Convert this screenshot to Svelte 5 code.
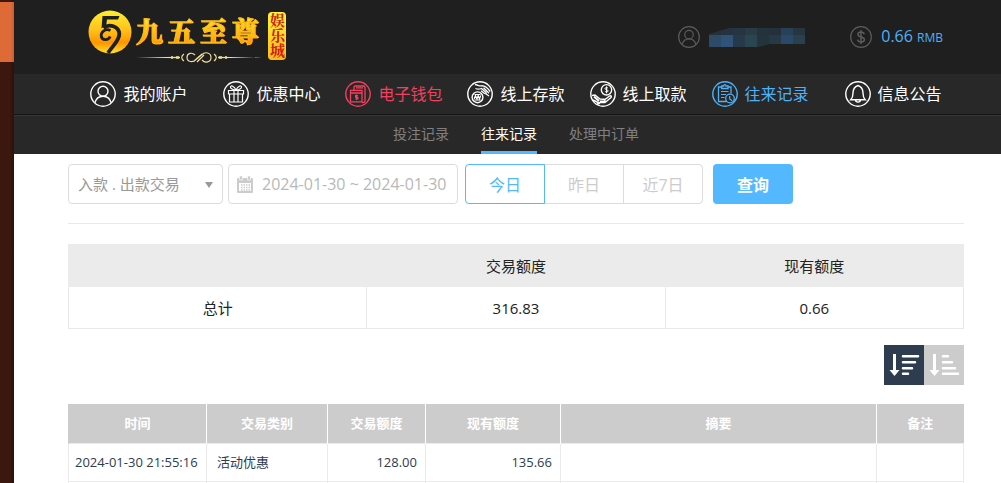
<script>
    const navItems = [
        { icon: 'user', label: '我的账户' },
        { icon: 'gift', label: '优惠中心' },
        { icon: 'wallet', label: '电子钱包', tone: 'hot' },
        { icon: 'deposit', label: '线上存款' },
        { icon: 'withdraw', label: '线上取款' },
        { icon: 'record', label: '往来记录', tone: 'current' },
        { icon: 'bell', label: '信息公告' }
    ];

    const tabs = ['投注记录', '往来记录', '处理中订单'];
    let activeTab = $state('往来记录');

    const ranges = ['今日', '昨日', '近7日'];
    let activeRange = $state('今日');

    let type = $state('入款 . 出款交易');
    let dates = $state('2024-01-30 ~ 2024-01-30');
    let sortDesc = $state(true);

    const columns = ['时间', '交易类别', '交易额度', '现有额度', '摘要', '备注'];
    const rows = [
        { time: '2024-01-30 21:55:16', kind: '活动优惠', amount: '128.00', balance: '135.66' },
        { time: '', kind: '', amount: '', balance: '' }
    ];

    // pixelated account name: top row and bottom row colours
    const maskTop = ['#24313b', '#24333f', '#253642', '#273c45', '#23323c', '#24313a', '#28415a', '#26363f'];
    const maskBottom = ['#2d4b68', '#305276', '#26394a', '#294650', '#24343d', '#263945', '#2b486b', '#29404e'];
</script>

{#snippet icon(name)}
    <svg class="icon" viewBox="0 0 26 26" fill="none" stroke="currentColor" stroke-width="1.4" aria-hidden="true">
        <circle cx="13" cy="13" r="12.2" />
        {#if name === 'user'}
            <circle cx="13" cy="10.2" r="5" />
            <path d="M4.8 21.8c1.2-4.200 4.300-6.600 8.200-6.600s7 2.400 8.200 6.600" />
        {:else if name === 'coin'}
            <path d="M16.800 9.700c-.4-1.700-1.800-2.500-3.700-2.500-2.200 0-3.700 1-3.700 2.800 0 4.300 7.600 1.700 7.600 6 0 1.900-1.600 2.900-3.900 2.900-2.200 0-3.800-1-4.100-2.900M13 4.800v16.500" stroke-width="1.700" />
        {:else if name === 'gift'}
            <path d="M5.500 9.500h15v3.500h-15zM6.500 13v8h13v-8M11 9.500V21M15 9.500V21M13 9c-2-4-5-5-5.500-3.200-.4 1.600 2.500 3 5.500 3.200 3-.2 5.900-1.600 5.500-3.200C18 4 15 5 13 9z" stroke-width="1.200" />
        {:else if name === 'wallet'}
            <path d="M9 9V6.500c0-1 .5-1.500 1.500-1.500h8c1 0 1.500.5 1.500 1.500V20c0 1-.5 1.500-1.500 1.500H17M11 6.800h7" stroke-width="1.300" />
            <path d="M5.500 9.300h11.500v11.500H5.500zM5.500 12H17" stroke-width="1.300" />
            <path d="M12.900 14.600h-2.300v1.700h2.200V18h-2.400M11.600 13.600v5.300" stroke-width="1.200" />
        {:else if name === 'deposit'}
            <circle cx="10.500" cy="16.300" r="5.400" />
            <path d="M7.500 13.500h6M7.500 19h6" stroke-width="1" />
            <path d="M7.200 18l1.300-3.500L10 18l1.200-3.500L12.500 18l1.200-3.500" stroke-width="1.200" />
            <path d="M8 3.500c3 .5 4 1.500 6.200 1.300 3-.3 5.500.8 9 5.700M8.500 7.500c2 .8 4 .8 6 0l4 3.500c1.500 1.300.7 2.400-1 1.500L14 9.700M18.500 12.500l3.500 2.500M16.500 6.800l5.500 5.500" stroke-width="1.300" />
        {:else if name === 'withdraw'}
            <circle cx="16.500" cy="8.800" r="5.200" />
            <path d="M18 7.200c-.4-.8-3-.9-3 .3 0 1.500 3.200.9 3.200 2.500 0 1.300-2.800 1.300-3.300.2M16.500 5.500v6.800" stroke-width="1" />
            <path d="M2 14.500l3-.5 5 4 4 .2c1.500.2 1.300 2-.2 2H10M3 19l5 2.500h7l6-5c1-1.500-.5-2.300-1.800-1.300L15 18.500" stroke-width="1.400" />
            <path d="M4 15.500l5 4.500M7 23l3-1" stroke-width="2" />
        {:else if name === 'record'}
            <path d="M14.500 20.500h-8V6h3M16 6h3v6.500M9.700 7.500V5h2c0-1.800 2.300-1.800 2.300 0h2v2.500z" stroke-width="1.300" />
            <path d="M9 10.500h7.500M9 13.500h5M9 16.500h3.500" stroke-width="1.200" />
            <circle cx="18" cy="17.500" r="4.300" stroke-width="1.300" />
            <path d="M17.700 15v3l2.500 1.800" stroke-width="1.200" />
        {:else if name === 'bell'}
            <path d="M5.800 18.700c2-2 2.200-3.600 2.200-6.700 0-4 1.700-6.300 5-7.500 3.300 1.200 5 3.500 5 7.500 0 3.100.2 4.700 2.200 6.700zM10.500 19c.2 2.800 4.800 2.800 5 0" />
        {/if}
    </svg>
{/snippet}

<div class="page">
    <div class="edge"><div class="edge-tab"></div></div>

    <div class="window">
        <header class="top">
            <a class="logo" href="#home">
                <svg class="emblem" viewBox="0 0 44 44" aria-hidden="true">
                    <defs>
                        <linearGradient id="gold" x1="0" y1="0" x2="0" y2="1">
                            <stop offset="0" stop-color="#ffee2c" />
                            <stop offset="0.45" stop-color="#ffc21a" />
                            <stop offset="0.75" stop-color="#ff9500" />
                            <stop offset="1" stop-color="#ffe32c" />
                        </linearGradient>
                    </defs>
                    <circle cx="22" cy="22" r="21.500" fill="url(#gold)" />
                    <path d="M14.500 6H31.500l-1.500 3.600H19L18.200 15.500l-4.700 2.800z" fill="#1f1f1f" />
                    <path d="M15.500 18C21 13.500 31 16 31.300 24c.1 7-6.300 11-11.300 19" fill="none" stroke="#1f1f1f" stroke-width="3.800" />
                    <path d="M22.500 20.500c-5-2.500-9.800 1.500-9.300 5.500.6 4.500 7 4.800 9 .5" fill="none" stroke="#1f1f1f" stroke-width="2.800" />
                </svg>
                <span class="brand">
                    <span class="brand-name">
                        {#each ['九', '五', '至', '尊'] as char}
                            <span>{char}</span>
                        {/each}
                    </span>
                    <svg class="flourish" viewBox="0 0 126 11" fill="none" stroke="#eddc9a" aria-hidden="true">
                        <path d="M0 5.500l44-.7v1.400zM126 5.500l-44-.7v1.400z" fill="#eddc9a" stroke="none" />
                        <path d="M35 5.500h2M40 5.500h3M83 5.500h3M89 5.500h2" stroke-width="2.500" />
                        <path d="M48 2c-3 2-3 5 0 7M78 2c3 2 3 5 0 7M59 3c-3-3-8-2-8 2.500s6 5.500 9 2l6-5c3-3 9-2 9 3s-6 6-9 2.500M58 9l8-7M61 10l7-7" stroke-width="1.200" />
                    </svg>
                </span>
                <span class="badge">娱乐城</span>
            </a>

            <div class="account">
                <span class="dim">{@render icon('user')}</span>
                <svg class="mask" viewBox="0 0 96 19" aria-hidden="true">
                    <clipPath id="brush"><path d="M0 6l20-6h76v16H61l-12 3H0z" /></clipPath>
                    <g clip-path="url(#brush)">
                        {#each maskTop as color, i}
                            <rect x={i * 12} y="0" width="12" height="7" fill={color} />
                            <rect x={i * 12} y="7" width="12" height="12" fill={maskBottom[i]} />
                        {/each}
                    </g>
                </svg>
                <span class="dim coin">{@render icon('coin')}</span>
                <span class="money">0.66 <small>RMB</small></span>
            </div>
        </header>

        <nav class="main-nav">
            {#each navItems as item (item.label)}
                <a href="#{item.icon}" class={item.tone}>
                    {@render icon(item.icon)}
                    <span>{item.label}</span>
                </a>
            {/each}
        </nav>

        <nav class="sub-nav">
            {#each tabs as tab (tab)}
                <a href="#{tab}" class:active={tab === activeTab} onclick={() => (activeTab = tab)}>{tab}</a>
            {/each}
        </nav>

        <main>
            <form class="filters" onsubmit={(e) => e.preventDefault()}>
                <div class="select-box">
                    <select aria-label="交易类型" bind:value={type}>
                        <option>入款 . 出款交易</option>
                    </select>
                </div>
                <label class="date-box">
                    <svg viewBox="0 0 16 17" aria-hidden="true">
                        <path d="M1 2h14q1 0 1 1v13q0 1-1 1H1q-1 0-1-1V3q0-1 1-1z" fill="#ccc" />
                        <path d="M2 7h12v8H2z" fill="#fff" />
                        <path d="M2.500 0h3v4h-3zM10.500 0h3v4h-3z" fill="#ccc" stroke="#fff" stroke-width=".6" />
                        <path d="M4 9h9M4 11.500h9M4 14h9" stroke="#ccc" stroke-width="1.500" stroke-dasharray="1.500 1" />
                    </svg>
                    <input type="text" aria-label="日期" bind:value={dates} />
                </label>
                <div class="ranges">
                    {#each ranges as range (range)}
                        <button type="button" class:active={range === activeRange} onclick={() => (activeRange = range)}>{range}</button>
                    {/each}
                </div>
                <button class="search" type="submit">查询</button>
            </form>

            <table class="summary">
                <thead>
                    <tr><th></th><th>交易额度</th><th>现有额度</th></tr>
                </thead>
                <tbody>
                    <tr><td>总计</td><td>316.83</td><td>0.66</td></tr>
                </tbody>
            </table>

            <div class="sort">
                <button type="button" aria-label="降序" class:active={sortDesc} onclick={() => (sortDesc = true)}>
                    <svg viewBox="0 0 40 40" aria-hidden="true">
                        <path d="M9 9h3v16h3.500l-5 6-5-6H9z" />
                        <path d="M19 11.300h15M19 17.300h12M19 23.200h9M19 28.800h5" stroke="#fff" stroke-width="2.500" stroke-linecap="round" />
                    </svg>
                </button>
                <button type="button" aria-label="升序" class:active={!sortDesc} onclick={() => (sortDesc = false)}>
                    <svg viewBox="0 0 40 40" aria-hidden="true">
                        <path d="M9 9h3v16h3.500l-5 6-5-6H9z" />
                        <path d="M19 11.300h5M19 17.300h9M19 23.200h12M19 28.800h15" stroke="#fff" stroke-width="2.500" stroke-linecap="round" />
                    </svg>
                </button>
            </div>

            <table class="records">
                <colgroup>
                    <col class="c-time" />
                    <col class="c-kind" />
                    <col class="c-amount" />
                    <col class="c-balance" />
                    <col />
                    <col class="c-note" />
                </colgroup>
                <thead>
                    <tr>
                        {#each columns as column (column)}
                            <th>{column}</th>
                        {/each}
                    </tr>
                </thead>
                <tbody>
                    {#each rows as row}
                        <tr>
                            <td class="time">{row.time}</td>
                            <td>{row.kind}</td>
                            <td class="num">{row.amount}</td>
                            <td class="num">{row.balance}</td>
                            <td></td>
                            <td></td>
                        </tr>
                    {/each}
                </tbody>
            </table>
        </main>
    </div>
</div>

<style>
    :global(body) {
        background: #fff;
    }

    .page {
        display: flex;
        height: 100vh;
        overflow: hidden;
        font-family: "Open Sans", "Noto Sans CJK SC", sans-serif;
        font-size: 15px;
        line-height: 20px;
        color: #222;
    }

    .page * {
        box-sizing: border-box;
    }

    a {
        text-decoration: none;
        color: inherit;
    }

    button, select, input {
        font-family: inherit;
        font-size: 16px;
        margin: 0;
    }

    button {
        cursor: pointer;
        padding: 0;
    }

    .edge {
        flex: 0 0 14px;
        padding-top: 2px;
        background: linear-gradient(90deg, #3b170e 70%, #2b100a);
    }

    .edge-tab {
        height: 60px;
        background: linear-gradient(90deg, #de6a38 80%, #c95c2e);
    }

    .window {
        flex: 1;
        min-width: 0;
    }

    .icon {
        width: 26px;
        height: 26px;
        flex: none;
        display: block;
    }

    .top {
        display: flex;
        align-items: center;
        justify-content: space-between;
        height: 74px;
        padding: 0 58px 0 74px;
        background: #1f1f1f;
    }

    .logo {
        display: flex;
        align-items: flex-start;
        height: 54px;
    }

    .emblem {
        width: 44px;
        height: 44px;
    }

    .brand {
        display: flex;
        flex-direction: column;
        margin: 4px 6px 0 4px;
    }

    .brand-name {
        display: flex;
        gap: 5px;
        font-family: "Noto Serif CJK SC", "Noto Sans CJK SC", serif;
        font-size: 27px;
        font-weight: 900;
        line-height: 34px;
    }

    .brand-name span {
        color: transparent;
        background: linear-gradient(#ffe926 15%, #ff9800 90%);
        background-clip: text;
        -webkit-background-clip: text;
        -webkit-text-stroke: 1px #ffb81a;
    }

    .flourish {
        width: 126px;
        height: 11px;
        margin-top: 4px;
    }

    .badge {
        width: 18px;
        height: 48px;
        margin-top: 2px;
        padding-top: 1px;
        border-radius: 4px;
        background: linear-gradient(#fff43a, #ffb91d);
        color: #c8200c;
        font-family: "Noto Serif CJK SC", "Noto Sans CJK SC", serif;
        font-size: 15px;
        font-weight: 700;
        line-height: 18px;
        writing-mode: vertical-rl;
    }

    .account {
        display: flex;
        align-items: center;
    }

    .dim {
        color: #5c5c5c;
    }

    .dim .icon {
        width: 22px;
        height: 22px;
    }

    .mask {
        width: 96px;
        height: 19px;
        margin-left: 9px;
    }

    .coin {
        margin-left: 45px;
    }

    .money {
        margin-left: 9px;
        color: #4fb1f8;
        font-size: 16px;
    }

    .money small {
        font-size: 12px;
    }

    .main-nav {
        display: flex;
        justify-content: center;
        gap: 25px;
        height: 41px;
        padding-left: 17px;
        background: #282828;
        border-bottom: 1px solid #141414;
        color: #fff;
        font-size: 16px;
    }

    .main-nav a {
        display: flex;
        align-items: center;
        gap: 7px;
        white-space: nowrap;
    }

    .main-nav a:first-child {
        margin-right: 11px;
    }

    .main-nav a:last-child {
        margin-left: 11px;
    }

    .main-nav .hot {
        color: #f2405f;
    }

    .main-nav .current {
        color: #4fb1f8;
    }

    .sub-nav {
        display: flex;
        justify-content: center;
        gap: 32px;
        height: 39px;
        padding-left: 17px;
        background: #282828;
        border-top: 1px solid #363636;
        color: #808080;
        font-size: 14px;
        line-height: 36px;
    }

    .sub-nav .active {
        color: #fff;
        border-bottom: 3px solid #54b8ff;
    }

    main {
        padding: 10px 37px 0 54px;
    }

    .filters {
        display: flex;
        height: 60px;
        border-bottom: 1px solid #e8e8e8;
    }

    .select-box {
        position: relative;
        width: 155px;
        height: 40px;
    }

    .select-box::after {
        content: '';
        position: absolute;
        top: 18px;
        right: 10px;
        border: 4px solid transparent;
        border-top: 6px solid #999;
        border-bottom: 0;
        pointer-events: none;
    }

    select {
        appearance: none;
        width: 100%;
        height: 100%;
        padding: 0 9px;
        border: 1px solid #dcdcdc;
        border-radius: 4px;
        background: #fff;
        color: #999;
        font-size: 15px;
    }

    .date-box {
        display: flex;
        align-items: center;
        gap: 9px;
        width: 230px;
        height: 40px;
        margin-left: 5px;
        padding-left: 8px;
        border: 1px solid #dcdcdc;
        border-radius: 4px;
    }

    .date-box svg {
        flex: none;
        width: 16px;
        height: 17px;
    }

    .date-box input {
        flex: 1;
        min-width: 0;
        padding: 0;
        border: 0;
        outline: 0;
        background: transparent;
        color: #b8b8b8;
    }

    .ranges {
        display: flex;
        height: 40px;
        margin-left: 7px;
    }

    .ranges button {
        width: 80px;
        margin-left: -1px;
        border: 1px solid #dcdcdc;
        background: #fff;
        color: #ccc;
    }

    .ranges button:first-child {
        margin-left: 0;
        border-radius: 4px 0 0 4px;
    }

    .ranges button:last-child {
        border-radius: 0 4px 4px 0;
    }

    .ranges button.active {
        position: relative;
        border-color: #54b8ff;
        color: #54b8ff;
    }

    .search {
        width: 80px;
        height: 40px;
        margin-left: 10px;
        border: 0;
        border-radius: 4px;
        background: #54b8ff;
        color: #fff;
        font-weight: 600;
    }

    table {
        width: 100%;
        border-collapse: collapse;
        table-layout: fixed;
    }

    .summary {
        margin-top: 20px;
        text-align: center;
    }

    .summary th {
        height: 42px;
        padding: 0;
        border: 1px solid #ebebeb;
        background: #ebebeb;
        font-weight: 400;
    }

    .summary td {
        height: 42px;
        padding: 0;
        border: 1px solid #e8e8e8;
    }

    .sort {
        display: flex;
        justify-content: flex-end;
        margin: 16px 0 19px;
    }

    .sort button {
        width: 40px;
        height: 40px;
        border: 0;
        background: #ccc;
    }

    .sort button.active {
        background: #2e3c50;
    }

    .sort svg {
        display: block;
        fill: #fff;
    }

    .records {
        color: #2e3c50;
        font-size: 13px;
    }

    .c-time {
        width: 138px;
    }

    .c-kind {
        width: 121px;
    }

    .c-amount {
        width: 98px;
    }

    .c-balance {
        width: 135px;
    }

    .c-note {
        width: 87px;
    }

    .records th {
        height: 39px;
        padding: 0;
        background: #ccc;
        color: #fff;
        font-weight: 700;
    }

    .records th:first-child {
        border-left: 1px solid #ccc;
    }

    .records th + th {
        border-left: 1px solid #fff;
    }

    .records td {
        height: 38px;
        padding: 0 10px;
        border: 1px solid #ebebeb;
        white-space: nowrap;
    }

    .records .time {
        padding: 0 6px;
    }

    .records .num {
        padding: 0 8px;
        text-align: right;
    }
</style>
